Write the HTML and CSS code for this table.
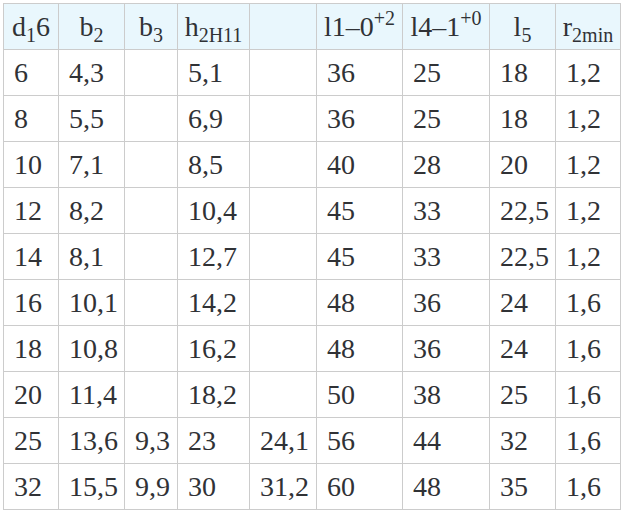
FILE: index.html
```html
<!DOCTYPE html>
<html>
<head>
<meta charset="utf-8">
<link rel="stylesheet" href="styles.css">
</head>
<body>
<table class="spec">
  <colgroup>
    <col class="c1"><col class="c2"><col class="c3"><col class="c4"><col class="c5"><col class="c6"><col class="c7"><col class="c8"><col class="c9">
  </colgroup>
  <thead>
    <tr>
      <th>d<sub>1</sub>6</th>
      <th>b<sub>2</sub></th>
      <th>b<sub>3</sub></th>
      <th>h<sub>2H11</sub></th>
      <th></th>
      <th>l1–0<sup>+2</sup></th>
      <th>l4–1<sup>+0</sup></th>
      <th>l<sub>5</sub></th>
      <th>r<sub>2min</sub></th>
    </tr>
  </thead>
  <tbody>
    <tr><td>6</td><td>4,3</td><td></td><td>5,1</td><td></td><td>36</td><td>25</td><td>18</td><td>1,2</td></tr>
    <tr><td>8</td><td>5,5</td><td></td><td>6,9</td><td></td><td>36</td><td>25</td><td>18</td><td>1,2</td></tr>
    <tr><td>10</td><td>7,1</td><td></td><td>8,5</td><td></td><td>40</td><td>28</td><td>20</td><td>1,2</td></tr>
    <tr><td>12</td><td>8,2</td><td></td><td>10,4</td><td></td><td>45</td><td>33</td><td>22,5</td><td>1,2</td></tr>
    <tr><td>14</td><td>8,1</td><td></td><td>12,7</td><td></td><td>45</td><td>33</td><td>22,5</td><td>1,2</td></tr>
    <tr><td>16</td><td>10,1</td><td></td><td>14,2</td><td></td><td>48</td><td>36</td><td>24</td><td>1,6</td></tr>
    <tr><td>18</td><td>10,8</td><td></td><td>16,2</td><td></td><td>48</td><td>36</td><td>24</td><td>1,6</td></tr>
    <tr><td>20</td><td>11,4</td><td></td><td>18,2</td><td></td><td>50</td><td>38</td><td>25</td><td>1,6</td></tr>
    <tr><td>25</td><td>13,6</td><td>9,3</td><td>23</td><td>24,1</td><td>56</td><td>44</td><td>32</td><td>1,6</td></tr>
    <tr><td>32</td><td>15,5</td><td>9,9</td><td>30</td><td>31,2</td><td>60</td><td>48</td><td>35</td><td>1,6</td></tr>
  </tbody>
</table>
</body>
</html>
```

FILE: styles.css
```css
html, body {
  margin: 0;
  padding: 0;
  background: #ffffff;
}

body {
  padding: 3px 0 0 3px;
  font-family: "Liberation Serif", "Times New Roman", serif;
}

.spec {
  border-collapse: collapse;
  table-layout: fixed;
  width: 618px;
  font-family: "Liberation Serif", "Times New Roman", serif;
  font-size: 28px;
  color: #303236;
}

.c1 { width: 55px; }
.c2 { width: 66px; }
.c3 { width: 53px; }
.c4 { width: 72px; }
.c5 { width: 67px; }
.c6 { width: 86px; }
.c7 { width: 87px; }
.c8 { width: 66px; }
.c9 { width: 65px; }

.spec th,
.spec td {
  border: 1px solid #cccccc;
  height: 46px;
  padding: 0 10px;
  line-height: 32px;
  box-sizing: border-box;
  vertical-align: middle;
  white-space: nowrap;
  overflow: hidden;
}

.spec th {
  background: #e9f7fd;
  font-weight: normal;
  text-align: center;
  padding: 0 4px;
}

.spec td {
  text-align: left;
}

.spec sub,
.spec sup {
  font-size: 20px;
  line-height: 0;
}

.spec sub {
  vertical-align: -6px;
}

.spec sup {
  vertical-align: 11px;
}
```
